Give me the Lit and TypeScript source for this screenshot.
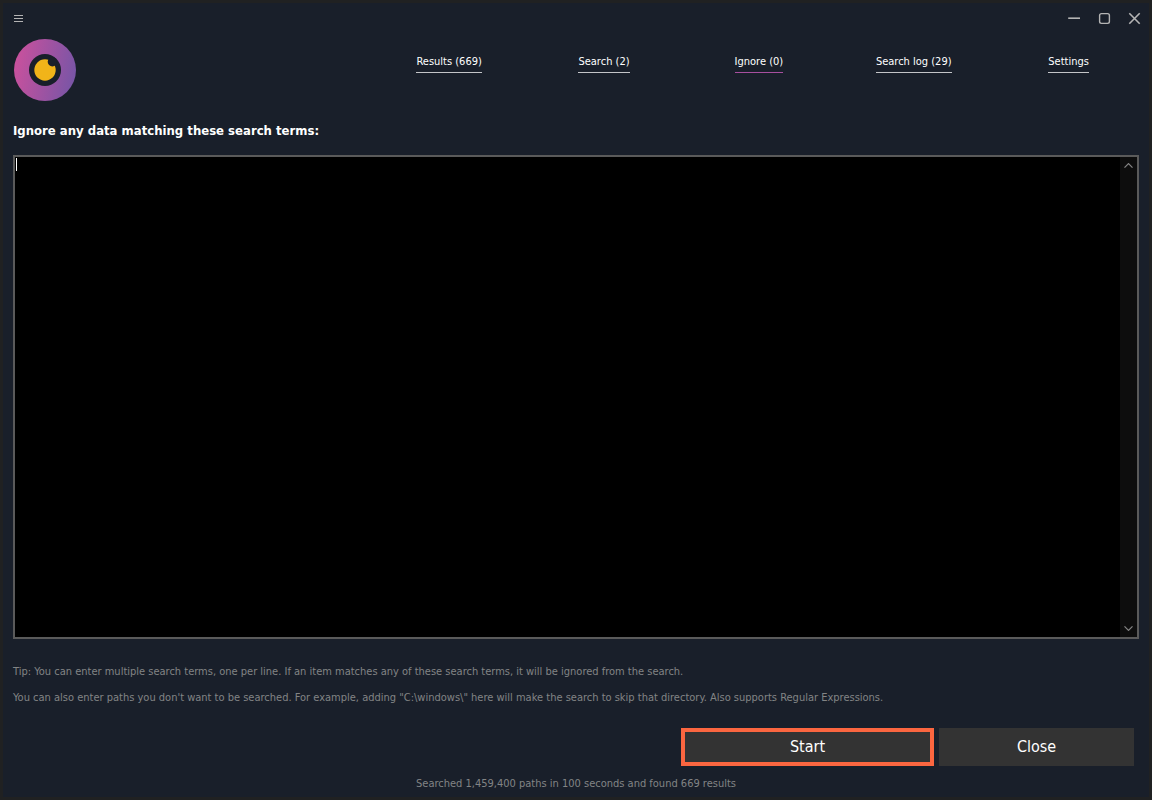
import { LitElement, html, css } from "lit";
import { customElement, state } from "lit/decorators.js";
import { classMap } from "lit/directives/class-map.js";

const TABS = [
  { id: "results", label: "Results (669)" },
  { id: "search", label: "Search (2)" },
  { id: "ignore", label: "Ignore (0)" },
  { id: "log", label: "Search log (29)" },
  { id: "settings", label: "Settings" },
];

@customElement("title-bar")
class TitleBar extends LitElement {
  static styles = css`
    :host {
      display: flex;
      justify-content: space-between;
      align-items: center;
      height: 31px;
      padding: 0 0 0 6px;
    }
    .controls {
      display: flex;
    }
    button {
      display: grid;
      place-items: center;
      height: 30px;
      width: 30px;
      padding: 0;
      border: 0;
      background: none;
      color: #b4b4b4;
    }
    .menu {
      width: 20px;
    }
    svg {
      display: block;
      fill: none;
      stroke: currentColor;
    }
  `;

  render() {
    return html`
      <button class="menu" aria-label="Menu">
        <svg width="10" height="8" viewBox="0 0 10 8"><path d="M0 .5h9M0 3.5h9M0 6.5h9" /></svg>
      </button>
      <div class="controls">
        <button aria-label="Minimize">
          <svg width="14" height="14" viewBox="0 0 14 14"><path d="M1.2 6.2h11.8" stroke-width="1.6" /></svg>
        </button>
        <button aria-label="Maximize">
          <svg width="14" height="14" viewBox="0 0 14 14">
            <rect x="2.6" y="1.6" width="9.8" height="9.8" rx="1.8" stroke-width="1.4" />
          </svg>
        </button>
        <button aria-label="Close window">
          <svg width="14" height="14" viewBox="0 0 14 14">
            <path d="M2.3 1.3l10.4 10.4M12.7 1.3L2.3 11.7" stroke-width="1.6" />
          </svg>
        </button>
      </div>
    `;
  }
}

@customElement("app-root")
class AppRoot extends LitElement {
  @state() private active = "ignore";

  static styles = css`
    :host {
      display: block;
      font-family: "DejaVu Sans Condensed", "DejaVu Sans", sans-serif;
      font-stretch: condensed;
      font-size: 11px;
      line-height: 16px;
      color: #fff;
    }
    .window {
      display: flex;
      flex-direction: column;
      box-sizing: border-box;
      min-height: 100vh;
      border: 3px solid #202122;
      background: #191f2a;
    }
    .header {
      display: grid;
      grid-template-columns: 10fr 21fr;
      padding: 5px 3px 0 0;
    }
    .logo {
      display: block;
      margin-left: 11px;
    }
    .tabs {
      display: grid;
      grid-template-columns: repeat(5, 1fr);
      justify-items: center;
      align-items: start;
      padding-top: 15px;
    }
    .tab {
      padding-bottom: 2px;
      border-bottom: 1px solid #c4c5c8;
      color: #fff;
      text-decoration: none;
      white-space: nowrap;
    }
    .tab.active {
      border-color: #a74f9f;
    }
    .main {
      display: flex;
      flex: 1;
      flex-direction: column;
      padding: 21px 10px 0;
    }
    .heading {
      font-size: 13px;
      font-weight: bold;
      line-height: 18px;
    }
    .editor {
      position: relative;
      display: flex;
      flex: 1;
      min-height: 120px;
      margin-top: 15px;
      border: 2px solid #5a5a5a;
      background: #000;
    }
    .terms {
      flex: 1;
      padding: 1px;
      border: 0;
      outline: 0;
      resize: none;
      overflow: hidden;
      background: #000;
      color: #fff;
      font: inherit;
      caret-color: transparent;
    }
    .caret {
      position: absolute;
      top: 1px;
      left: 1px;
      width: 1px;
      height: 13px;
      background: #fff;
    }
    .scroller {
      display: flex;
      flex-direction: column;
      justify-content: space-between;
      width: 17px;
      background: #0d0d0d;
    }
    .arrow {
      display: grid;
      place-items: center;
      width: 17px;
      height: 17px;
      padding: 0;
      border: 0;
      background: none;
      color: #858585;
    }
    .arrow svg {
      display: block;
      fill: none;
      stroke: currentColor;
      stroke-width: 1.2;
    }
    .tips {
      display: flex;
      flex-direction: column;
      gap: 10px;
      margin-top: 25px;
      color: #828485;
    }
    .tips p {
      margin: 0;
    }
    .actions {
      display: flex;
      justify-content: flex-end;
      gap: 5px;
      margin-top: 22px;
      padding-right: 5px;
    }
    .action {
      height: 38px;
      padding: 0;
      border: 0;
      background: #333;
      color: #fff;
      font: inherit;
      font-size: 16px;
    }
    .start {
      width: 253px;
      border: 4px solid #fb6640;
    }
    .close {
      width: 195px;
    }
    .status {
      padding: 10px 0 5px;
      color: #828485;
      text-align: center;
    }
  `;

  render() {
    return html`
      <div class="window">
        <title-bar></title-bar>
        <header class="header">
          <svg class="logo" width="62" height="62" viewBox="0 0 62 62" role="img" aria-label="Logo">
            <defs>
              <linearGradient id="ring" x1="0" y1="0.4" x2="1" y2="0.6">
                <stop offset="0" stop-color="#c9519d" />
                <stop offset="1" stop-color="#7855a6" />
              </linearGradient>
            </defs>
            <circle cx="31" cy="31" r="31" fill="url(#ring)" />
            <circle cx="31" cy="31" r="16" fill="#191f2a" />
            <circle cx="31" cy="31" r="10.7" fill="#f1b419" />
            <circle cx="38.4" cy="22.8" r="4.7" fill="#191f2a" />
          </svg>
          <nav class="tabs">
            ${TABS.map(
              (t) => html`<a
                href="#${t.id}"
                class=${classMap({ tab: true, active: t.id === this.active })}
                @click=${() => (this.active = t.id)}
                >${t.label}</a
              >`,
            )}
          </nav>
        </header>
        <main class="main">
          <label class="heading" for="terms">Ignore any data matching these search terms:</label>
          <div class="editor">
            <textarea class="terms" id="terms" spellcheck="false"></textarea>
            <span class="caret"></span>
            <div class="scroller">
              <button class="arrow" aria-label="Scroll up">
                <svg width="9" height="5" viewBox="0 0 9 5"><path d="M.5 4.6l4-4 4 4" /></svg>
              </button>
              <button class="arrow" aria-label="Scroll down">
                <svg width="9" height="5" viewBox="0 0 9 5"><path d="M.5 .4l4 4 4-4" /></svg>
              </button>
            </div>
          </div>
          <div class="tips">
            <p>Tip: You can enter multiple search terms, one per line. If an item matches any of these search terms, it will be ignored from the search.</p>
            <p>You can also enter paths you don't want to be searched. For example, adding "C:\\windows\\" here will make the search to skip that directory. Also supports Regular Expressions.</p>
          </div>
          <div class="actions">
            <button class="action start">Start</button>
            <button class="action close">Close</button>
          </div>
        </main>
        <footer class="status">Searched 1,459,400 paths in 100 seconds and found 669 results</footer>
      </div>
    `;
  }
}
